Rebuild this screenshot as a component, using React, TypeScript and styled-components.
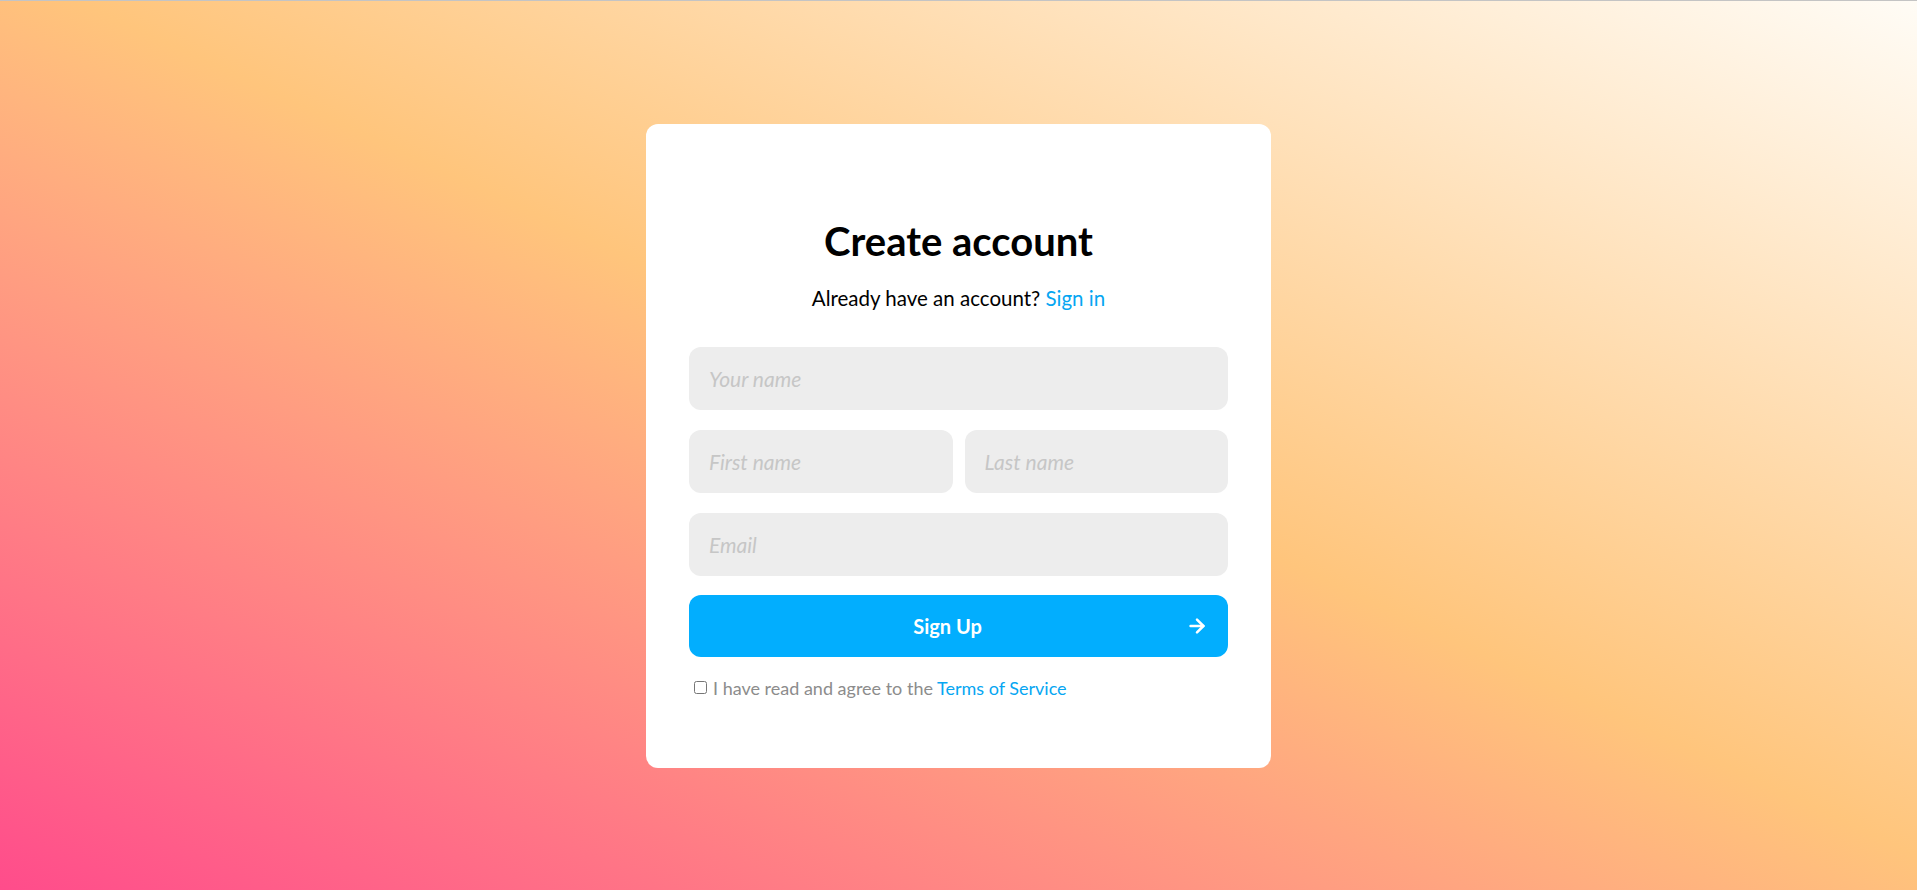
import React from "react";
import styled, { createGlobalStyle } from "styled-components";
import { ArrowRight } from "lucide-react";

const Global = createGlobalStyle`
  * { box-sizing: border-box; }
  html, body { margin: 0; padding: 0; }
  body {
    font-family: "Trebuchet MS", "Lato", "Noto Sans", sans-serif;
    border-top: 1px solid #c4c4c4;
  }
`;

const Page = styled.div`
  min-height: 889px;
  display: flex;
  align-items: center;
  justify-content: center;
  background: linear-gradient(to top right, #ff4c8b 0%, #ffc57c 52%, #fffcf6 100%);
`;

const Card = styled.div`
  width: 625px;
  background: #fff;
  border-radius: 12px;
  padding: 93px 43px 70px;
  display: flex;
  flex-direction: column;
`;

const Title = styled.h1`
  margin: 0;
  font-size: 40px;
  line-height: 48px;
  font-weight: 700;
  text-align: center;
  color: #000;
`;

const Subtitle = styled.p`
  margin: 22px 0 38px;
  font-size: 20.5px;
  line-height: 22px;
  text-align: center;
  color: #000;
`;

const Link = styled.a`
  color: #06a6f2;
  text-decoration: none;
`;

const Row = styled.div`
  display: flex;
  gap: 12px;
  margin-bottom: ${(p: { $mb?: number }) => p.$mb ?? 20}px;
`;

const Input = styled.input`
  flex: 1;
  min-width: 0;
  height: 63px;
  border: none;
  outline: none;
  border-radius: 12px;
  background: #ededed;
  padding: 0 20px;
  font-family: inherit;
  font-size: 21px;
  color: #333;
  &::placeholder {
    color: #c6c6c6;
    font-style: italic;
  }
`;

const Button = styled.button`
  height: 62px;
  border: none;
  border-radius: 12px;
  background: #02aefe;
  color: #fff;
  display: flex;
  align-items: center;
  padding: 0 20px;
  font-family: inherit;
  font-size: 20px;
  font-weight: 700;
  cursor: pointer;
`;

const ButtonLabel = styled.span`
  flex: 1;
  text-align: center;
`;

const Terms = styled.label`
  margin-top: 21px;
  display: flex;
  align-items: center;
  font-size: 18px;
  line-height: 20px;
  color: #8c8c8c;
  padding-left: 4px;
`;

const Check = styled.input`
  width: 13px;
  height: 13px;
  margin: 0 6px 0 1px;
`;

export default function App() {
  return (
    <>
      <Global />
      <Page>
        <Card>
          <Title>Create account</Title>
          <Subtitle>
            Already have an account? <Link href="#">Sign in</Link>
          </Subtitle>
          <Row>
            <Input placeholder="Your name" />
          </Row>
          <Row>
            <Input placeholder="First name" />
            <Input placeholder="Last name" />
          </Row>
          <Row $mb={19}>
            <Input placeholder="Email" />
          </Row>
          <Button>
            <ButtonLabel>Sign Up</ButtonLabel>
            <ArrowRight size={22} strokeWidth={2.75} />
          </Button>
          <Terms>
            <Check type="checkbox" />
            <span>
              I have read and agree to the <Link href="#">Terms of Service</Link>
            </span>
          </Terms>
        </Card>
      </Page>
    </>
  );
}
